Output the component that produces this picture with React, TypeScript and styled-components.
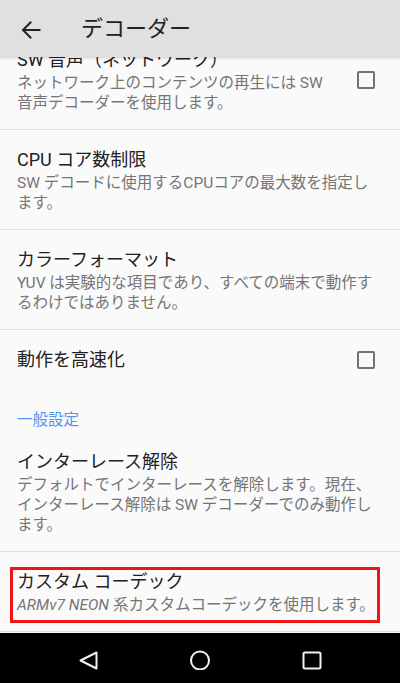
import React from 'react';
import styled, { createGlobalStyle } from 'styled-components';

const Global = createGlobalStyle`
  html, body { margin: 0; padding: 0; background: #fafafa; }
  body { font-family: Roboto, "Noto Sans CJK JP", sans-serif; }
  * { box-sizing: border-box; }
`;

const Screen = styled.div`
  width: 400px;
  height: 683px;
  display: flex;
  flex-direction: column;
  overflow: hidden;
  background: #fafafa;
`;

const AppBar = styled.header`
  flex: none;
  height: 57px;
  display: flex;
  align-items: center;
  padding-left: 19px;
  background: #e0e0e0;
  position: relative;
  z-index: 2;
  box-shadow: 0 1px 3px rgba(0, 0, 0, 0.18);
`;

const BarTitle = styled.h1`
  margin: 0 0 0 38px;
  font-size: 22px;
  font-weight: 400;
  color: #212121;
  line-height: 1;
`;

const Viewport = styled.main`
  flex: 1;
  overflow: hidden;
`;

const List = styled.div<{ $scroll: number }>`
  margin-top: ${p => -p.$scroll}px;
  display: flex;
  flex-direction: column;
`;

const Row = styled.div<{ $divider?: boolean }>`
  position: relative;
  display: flex;
  align-items: center;
  gap: 28px;
  padding: 17px 23px ${p => (p.$divider ? 16 : 17)}px 17px;
  border-bottom: ${p => (p.$divider ? '1px solid #e0e0e0' : 'none')};
`;

const TextBlock = styled.div`
  flex: 1;
  min-width: 0;
`;

const Title = styled.div`
  font-size: 18px;
  line-height: 26px;
  color: #212121;
`;

const Summary = styled.div`
  font-size: 15.5px;
  line-height: 20px;
  color: #757575;
`;

const Latin = styled.span`
  font-style: italic;
`;

const Checkbox = styled.span`
  flex: none;
  width: 18px;
  height: 18px;
  margin-right: 2px;
  border: 2px solid #737373;
  border-radius: 2px;
`;

const Category = styled.div`
  padding: 20px 17px 2px;
  font-size: 15.5px;
  line-height: 20px;
  color: #5592f0;
`;

const Highlight = styled.div`
  position: absolute;
  left: 10px;
  top: 15px;
  width: 370px;
  height: 56px;
  border: 3px solid #f21414;
  pointer-events: none;
`;

const NavBar = styled.nav`
  flex: none;
  height: 50px;
  background: #000;
  display: flex;
  justify-content: center;
  align-items: center;
`;

const NavSlot = styled.div`
  width: 112px;
  display: flex;
  justify-content: center;
`;

const BackArrow = () => (
  <svg width="24" height="24" viewBox="0 0 24 24" fill="none" stroke="#212121" strokeWidth="2" strokeLinecap="square">
    <path d="M20.5 13H4.5" />
    <path d="M11.5 5.5L4 13l7.5 7.5" strokeLinejoin="miter" />
  </svg>
);

const NavIcon = ({ kind }: { kind: 'back' | 'home' | 'recent' }) => (
  <svg width="24" height="24" viewBox="0 0 24 24" fill="none" stroke="#f2f2f2" strokeWidth="2" strokeLinejoin="round">
    {kind === 'back' && <path d="M20.5 6.5V22.5L4.5 14.5Z" />}
    {kind === 'home' && <circle cx="12" cy="14.5" r="9" />}
    {kind === 'recent' && <rect x="3.5" y="6.5" width="17" height="16" rx="1.5" />}
  </svg>
);

export default function App() {
  return (
    <>
      <Global />
      <Screen>
        <AppBar>
          <BackArrow />
          <BarTitle>デコーダー</BarTitle>
        </AppBar>
        <Viewport>
          <List $scroll={27}>
            <Row $divider>
              <TextBlock>
                <Title>SW 音声（ネットワーク）</Title>
                <Summary>ネットワーク上のコンテンツの再生には SW 音声デコーダーを使用します。</Summary>
              </TextBlock>
              <Checkbox />
            </Row>
            <Row $divider>
              <TextBlock>
                <Title>CPU コア数制限</Title>
                <Summary>SW デコードに使用するCPUコアの最大数を指定します。</Summary>
              </TextBlock>
            </Row>
            <Row $divider>
              <TextBlock>
                <Title>カラーフォーマット</Title>
                <Summary>YUV は実験的な項目であり、すべての端末で動作するわけではありません。</Summary>
              </TextBlock>
            </Row>
            <Row>
              <TextBlock>
                <Title>動作を高速化</Title>
              </TextBlock>
              <Checkbox />
            </Row>
            <Category>一般設定</Category>
            <Row $divider>
              <TextBlock>
                <Title>インターレース解除</Title>
                <Summary>デフォルトでインターレースを解除します。現在、インターレース解除は SW デコーダーでのみ動作します。</Summary>
              </TextBlock>
            </Row>
            <Row $divider>
              <TextBlock>
                <Title>カスタム コーデック</Title>
                <Summary>
                  <Latin>ARMv7 NEON</Latin> 系カスタムコーデックを使用します。
                </Summary>
              </TextBlock>
              <Highlight />
            </Row>
          </List>
        </Viewport>
        <NavBar>
          <NavSlot><NavIcon kind="back" /></NavSlot>
          <NavSlot><NavIcon kind="home" /></NavSlot>
          <NavSlot><NavIcon kind="recent" /></NavSlot>
        </NavBar>
      </Screen>
    </>
  );
}
